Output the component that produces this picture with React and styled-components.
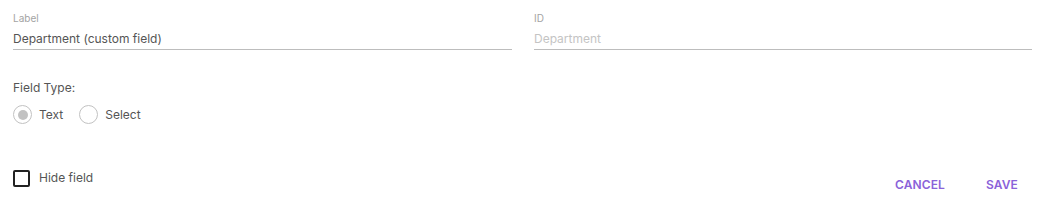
import styled, { createGlobalStyle } from 'styled-components';

const Global = createGlobalStyle`
    body {
        margin: 0;
        background: #fff;
        font-family: Inter, "Noto Sans", sans-serif;
    }
`;

const Page = styled.div`
    width: 1044px;
    height: 210px;
    box-sizing: border-box;
    padding: 12px 10px 0 13px;
`;

const Fields = styled.div`
    display: grid;
    grid-template-columns: 499px 498px;
    column-gap: 22px;
`;

const Field = styled.div`
    display: flex;
    flex-direction: column;
`;

const Label = styled.label`
    font-size: 10px;
    line-height: 12px;
    color: #a3a3a3;
`;

const Input = styled.input`
    margin-top: 5px;
    padding: 0 0 2px;
    border: none;
    border-bottom: 1px solid #bdbdbd;
    outline: none;
    font-family: inherit;
    font-size: 12px;
    line-height: 18px;
    height: 21px;
    box-sizing: border-box;
    color: #555;
    background: transparent;

    &:disabled {
        color: #c4c4c4;
    }
`;

const GroupTitle = styled.div`
    margin-top: 29px;
    font-size: 12px;
    line-height: 18px;
    color: #555;
`;

const RadioRow = styled.div`
    display: flex;
    align-items: center;
    gap: 16px;
    margin-top: 8px;
`;

const Option = styled.label`
    display: flex;
    align-items: center;
    gap: 7px;
    font-size: 12px;
    line-height: 19px;
    color: #555;
`;

const Circle = styled.span`
    width: 19px;
    height: 19px;
    box-sizing: border-box;
    border-radius: 50%;
    border: 1.5px solid #c2c2c2;
    display: flex;
    align-items: center;
    justify-content: center;

    &::after {
        content: '';
        width: 10px;
        height: 10px;
        border-radius: 50%;
        background: ${p => (p.$checked ? '#c2c2c2' : 'transparent')};
    }
`;

const Bottom = styled.div`
    display: flex;
    justify-content: space-between;
    align-items: flex-start;
    margin-top: 42px;
`;

const CheckLabel = styled.label`
    display: flex;
    align-items: center;
    gap: 9px;
    margin-top: 3px;
    font-size: 12px;
    line-height: 18px;
    color: #555;
`;

const Box = styled.span`
    width: 17px;
    height: 17px;
    box-sizing: border-box;
    border: 2px solid #222;
    border-radius: 2px;
`;

const Actions = styled.div`
    display: flex;
    gap: 17px;
`;

const Button = styled.button`
    min-width: 64px;
    height: 36px;
    padding: 6px 8px;
    border: none;
    background: transparent;
    font-family: inherit;
    font-size: 12px;
    font-weight: 600;
    letter-spacing: 0.1px;
    color: #8b62d9;
    cursor: pointer;
`;

const App = () => {
    return (
        <Page>
            <Global />
            <Fields>
                <Field>
                    <Label>Label</Label>
                    <Input defaultValue="Department (custom field)" />
                </Field>
                <Field>
                    <Label>ID</Label>
                    <Input defaultValue="Department" disabled />
                </Field>
            </Fields>
            <GroupTitle>Field Type:</GroupTitle>
            <RadioRow>
                <Option><Circle $checked />Text</Option>
                <Option><Circle />Select</Option>
            </RadioRow>
            <Bottom>
                <CheckLabel><Box />Hide field</CheckLabel>
                <Actions>
                    <Button>CANCEL</Button>
                    <Button>SAVE</Button>
                </Actions>
            </Bottom>
        </Page>
    );
};

export default App;
